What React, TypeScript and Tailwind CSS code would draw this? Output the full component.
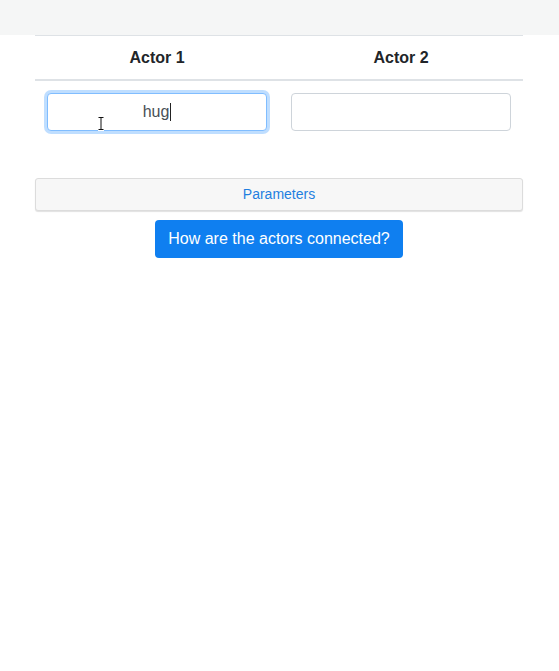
import React from "react";

export default function App() {
  return (
    <div className="min-h-[671px] bg-white" style={{ fontFamily: '"Liberation Sans", Arial, sans-serif' }}>
      <div className="h-[35px] bg-[#f5f6f6]" />
      <div className="mx-[35px] w-[488px]">
        <div className="border-t border-[#dee2e6]">
          <div className="grid grid-cols-2 h-[45px] border-b-2 border-[#dee2e6] items-center text-[16px] font-bold text-[#212529]">
            <div className="text-center">Actor 1</div>
            <div className="text-center">Actor 2</div>
          </div>
          <div className="grid grid-cols-2 px-0 pt-[12px] pb-[12px]">
            <div className="px-[12px] relative">
              <div className="h-[38px] rounded-[4px] border border-[#80bdff] shadow-[0_0_0_3px_rgba(0,123,255,0.25)] bg-white flex items-center justify-center text-[16px] text-[#495057]">
                <span>hug</span>
                <span className="inline-block w-px h-[18px] bg-[#222] ml-px" />
              </div>
              <svg className="absolute left-[62px] top-[23px]" width="8" height="15" viewBox="0 0 8 15">
                <path d="M1 1 H7 M4 1 V14 M1 14 H7" stroke="#fff" strokeWidth="3" fill="none" />
                <path d="M1.5 1.5 H6.5 M4 1.5 V13.5 M1.5 13.5 H6.5" stroke="#111" strokeWidth="1" fill="none" />
              </svg>
            </div>
            <div className="px-[12px]">
              <div className="h-[38px] rounded-[4px] border border-[#ced4da] bg-white" />
            </div>
          </div>
        </div>
        <div className="mt-[35px] h-[33px] rounded-[3px] border border-[#dcdcdc] bg-[#f7f7f7] shadow-[0_1px_1px_rgba(0,0,0,0.12)] flex items-center justify-center text-[14px] text-[#1f7fe0]">
          Parameters
        </div>
        <div className="mt-[9px] flex justify-center">
          <div className="h-[38px] w-[248px] rounded-[4px] bg-[#0f7ff0] text-white text-[16px] flex items-center justify-center">
            How are the actors connected?
          </div>
        </div>
      </div>
    </div>
  );
}
